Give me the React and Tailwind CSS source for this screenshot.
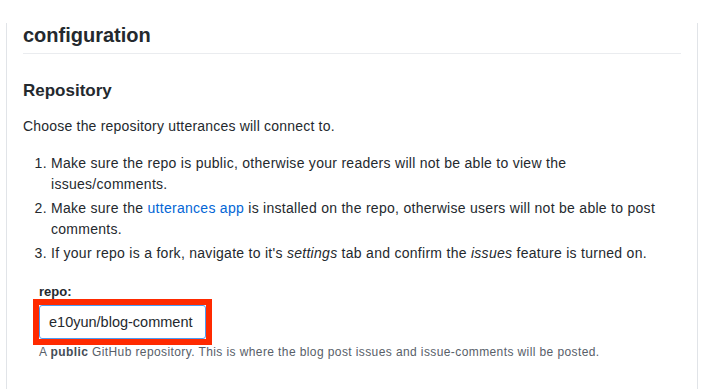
export default function App() {
    return (
        <div className="w-[706px] h-[389px] bg-white overflow-hidden" style={{ fontFamily: '"Liberation Sans", Arial, sans-serif' }}>
            <div className="ml-[6px] w-[692px] h-full border-x border-[#e1e4e8] px-4 text-[#24292e]">
                <h2 className="mt-[23px] pb-[5px] border-b border-[#eaecef] text-[20px] leading-[25px] font-bold">
                    configuration
                </h2>

                <h3 className="mt-[26px] text-[17px] leading-[21px] font-bold">Repository</h3>
                <p className="mt-[15px] text-[14px] leading-[21px] tracking-[0.2px]">
                    Choose the repository utterances will connect to.
                </p>

                <ol className="mt-4 pl-7 list-decimal text-[14px] leading-[21px] tracking-[0.28px]">
                    <li>
                        Make sure the repo is public, otherwise your readers will not be able to view the
                        <br />
                        issues/comments.
                    </li>
                    <li className="mt-[3px]">
                        Make sure the <a href="#" className="text-[#0366d6]">utterances app</a> is installed on the repo, otherwise users will not be able to post
                        <br />
                        comments.
                    </li>
                    <li className="mt-[3px]">
                        If your repo is a fork, navigate to it's <em>settings</em> tab and confirm the <em>issues</em> feature is turned on.
                    </li>
                </ol>

                <div className="mt-[19px] pl-4">
                    <label htmlFor="repo" className="block text-[13px] leading-[18px] font-bold">repo:</label>
                    <div className="relative mt-1 w-[167px]">
                        <input
                            id="repo"
                            type="text"
                            defaultValue="e10yun/blog-comment"
                            className="block w-full h-[34px] px-[9px] text-[14.5px] text-[#24292e] border border-[#4a9cf5] rounded-[3px] outline-none"
                        />
                        <div className="absolute -inset-[6px] border-[6px] border-[#ff2a00] pointer-events-none"></div>
                    </div>
                    <p className="mt-1 text-[12px] leading-[18px] tracking-[0.4px] text-[#586069]">
                        A <strong className="text-[#444d56]">public</strong> GitHub repository. This is where the blog post issues and issue-comments will be posted.
                    </p>
                </div>
            </div>
        </div>
    );
}
